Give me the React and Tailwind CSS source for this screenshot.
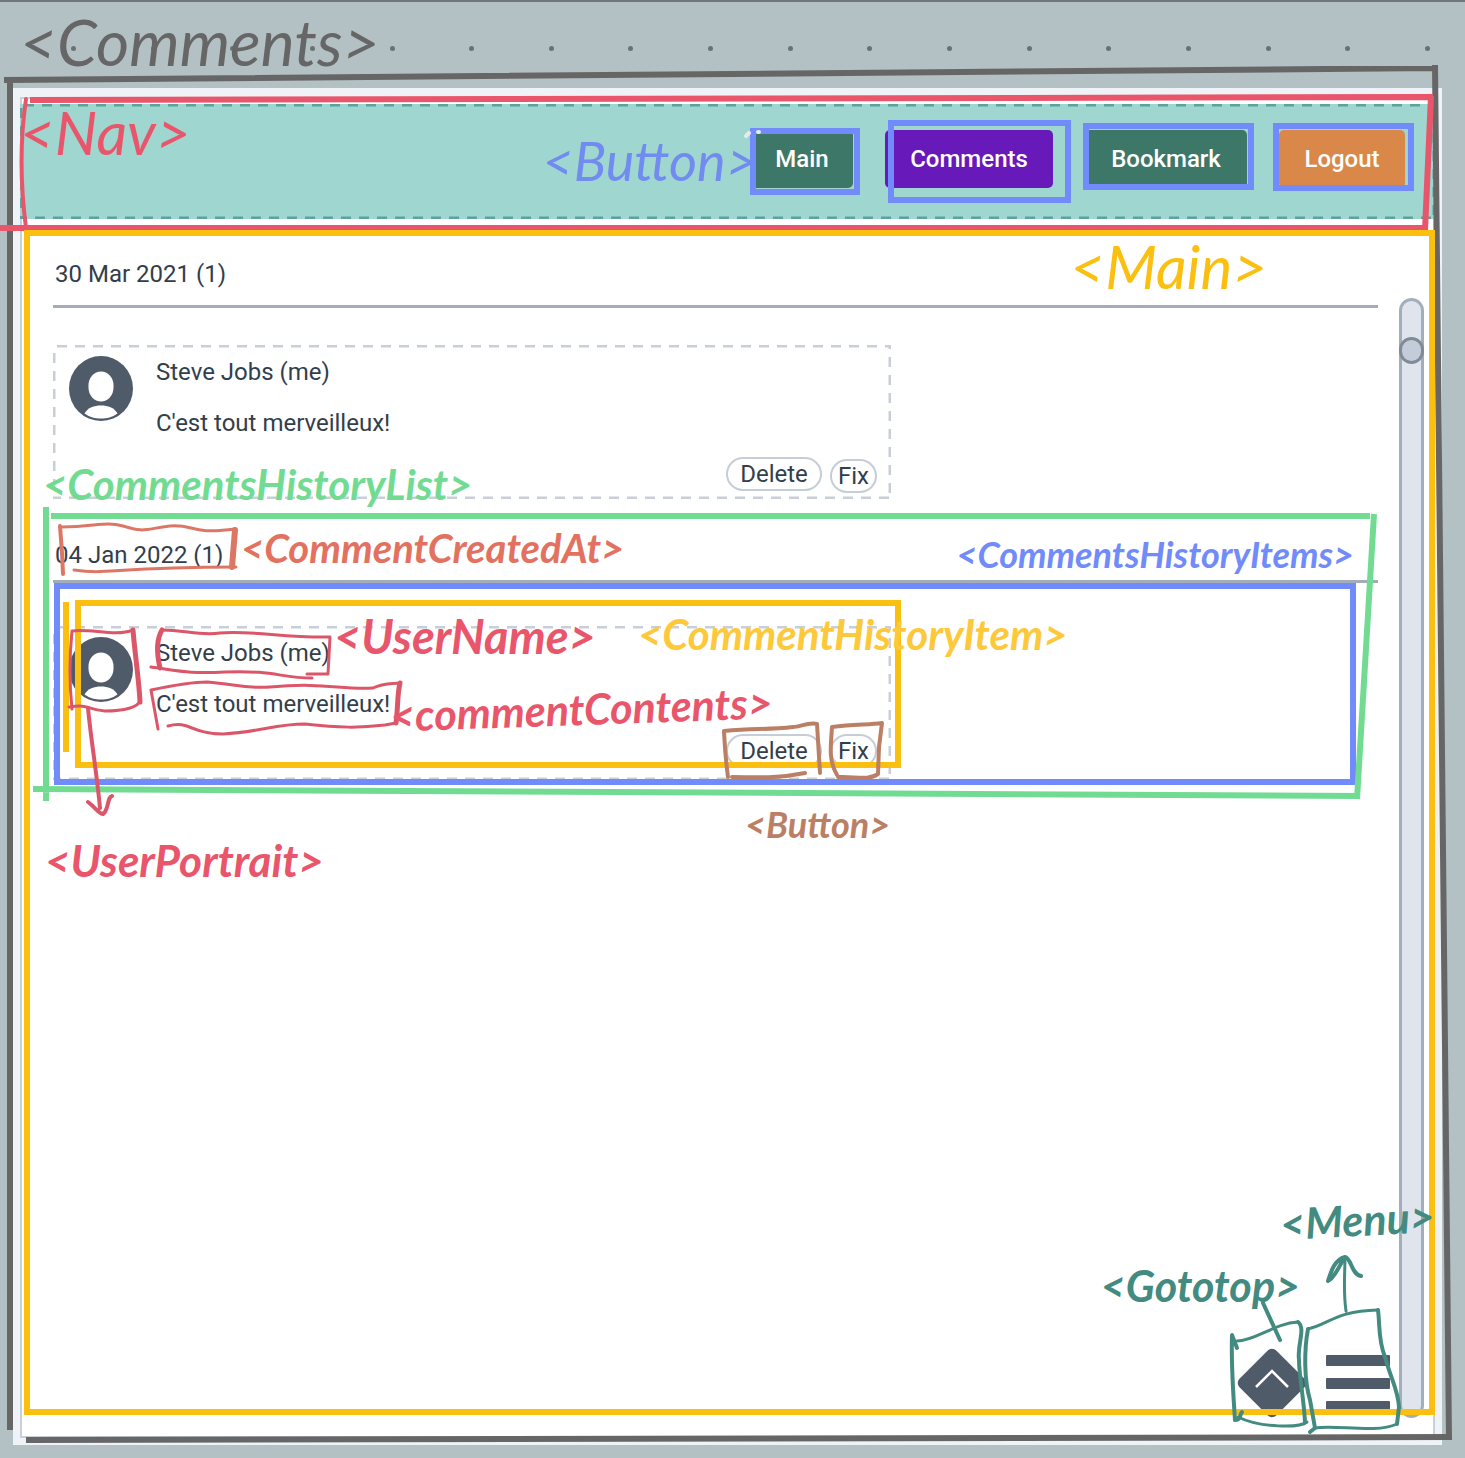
import React from "react";

const NAV_ITEMS = [
  { label: "Main", style: "w-[102px] bg-[#3d7768]" },
  { label: "Comments", style: "w-[168px] bg-[#6819b9]" },
  { label: "Bookmark", style: "w-[162px] bg-[#3d7768]" },
  { label: "Logout", style: "w-[126px] bg-[#d9884a]" },
];

const HISTORY = [
  { date: "30 Mar 2021 (1)", heading: "h-[50px]", actions: "pt-[18px]", fix: "mt-[2px]" },
  { date: "04 Jan 2022 (1)", heading: "h-[44px]", actions: "pt-[14px]", fix: "" },
];

// Component names written over the wireframe.
const LABELS = [
  { text: "<Comments>", style: "left-[20px] top-[8px] text-[64px] text-[#666666]" },
  { text: "<Nav>", style: "left-[20px] top-[100px] text-[60px] text-[#e9566b]" },
  { text: "<Button>", style: "right-[708px] top-[132px] text-[54px] text-[#718bf0]" },
  { text: "<Main>", style: "right-[198px] top-[234px] text-[60px] text-[#fbbf10]" },
  { text: "<CommentsHistoryList>", style: "left-[43px] top-[461px] text-[42px] font-bold text-[#72db92]" },
  { text: "<CommentCreatedAt>", style: "left-[241px] top-[526px] text-[40px] font-bold text-[#e2725f]" },
  { text: "<CommentsHistoryItems>", style: "right-[111px] top-[534px] text-[36px] font-bold text-[#718bfb]" },
  { text: "<UserName>", style: "left-[334px] top-[611px] text-[47px] font-bold text-[#e9566b]" },
  { text: "<CommentHistoryItem>", style: "left-[638px] top-[611px] text-[42px] font-bold text-[#fdc93a]" },
  { text: "<commentContents>", style: "left-[390px] top-[685px] -rotate-2 text-[43px] font-bold text-[#e9566b]" },
  { text: "<Button>", style: "left-[745px] top-[804px] text-[36px] font-bold text-[#bb7f66]" },
  { text: "<UserPortrait>", style: "left-[45px] top-[836px] text-[44px] font-bold text-[#e9566b]" },
  { text: "<Gototop>", style: "right-[165px] top-[1262px] text-[43px] font-bold text-[#438a80]" },
  { text: "<Menu>", style: "right-[30px] top-[1196px] -rotate-3 text-[43px] font-bold text-[#438a80]" },
];

function DashedFrame({ color }) {
  return (
    <svg className={`pointer-events-none absolute inset-0 size-full ${color}`} fill="none" aria-hidden="true">
      <rect width="100%" height="100%" stroke="currentColor" strokeWidth="5" strokeDasharray="10 8" strokeDashoffset="-4" />
    </svg>
  );
}

function DotRow() {
  return (
    <div className="flex h-[86px] items-start justify-between pt-[44px] pr-[35px] pl-[71px]">
      {Array.from({ length: 18 }, (_, i) => (
        <span key={i} className="size-[5px] rounded-full bg-[#6a7173]" />
      ))}
    </div>
  );
}

function Nav() {
  return (
    <nav className="relative -mx-[2px] mt-[5px] flex h-[115px] justify-end gap-[32px] bg-[#9fd6cf] pt-[26px] pr-[30px]">
      <DashedFrame color="text-[#5aa59b]" />
      {NAV_ITEMS.map((item) => (
        <button
          key={item.label}
          type="button"
          className={`h-[58px] rounded-[5px] text-[24px] font-medium text-white ${item.style}`}
        >
          {item.label}
        </button>
      ))}
    </nav>
  );
}

function UserPortrait() {
  return (
    <svg viewBox="0 0 64 65" className="h-[65px] w-[64px] shrink-0" role="img" aria-label="User portrait">
      <ellipse cx="32" cy="32.5" rx="32" ry="32.5" fill="#4f5b69" />
      <rect x="19.5" y="15.5" width="25" height="30" rx="12.5" ry="14" fill="#fff" />
      <path d="M15.5 57.5C19 51.500 25 49.500 32 49.500S45 51.500 48.500 57.500C43 61.500 38 62.500 32 62.500S21 61.500 15.500 57.500Z" fill="#fff" />
    </svg>
  );
}

function CommentItem({ actions, fix }) {
  return (
    <article className="relative flex h-[154px] w-[838px] max-w-full pt-[11px] pr-[14px] pl-[16px]">
      <DashedFrame color="text-[#c8cfd8]" />
      <UserPortrait />
      <div className="flex flex-1 flex-col pl-[23px]">
        <h3 className="text-[24px] leading-[32px]">Steve Jobs (me)</h3>
        <p className="mt-[19px] text-[24px] leading-[32px]">C'est tout merveilleux!</p>
        <div className={`flex justify-end gap-[8px] ${actions}`}>
          <button type="button" className="h-[34px] w-[96px] rounded-full border-2 border-[#c5cdd7] bg-white text-[24px] leading-[30px]">
            Delete
          </button>
          <button type="button" className={`h-[34px] w-[47px] rounded-full border-2 border-[#c5cdd7] bg-white text-[24px] leading-[30px] ${fix}`}>
            Fix
          </button>
        </div>
      </div>
    </article>
  );
}

function HistoryGroup({ date, heading, actions, fix }) {
  return (
    <section className="flex h-[281px] flex-col">
      <h2 className={`border-b-[3px] border-[#a3adb9] pl-[2px] text-[24px] leading-[32px] ${heading}`}>{date}</h2>
      <div className="mt-auto pb-[40px]">
        <CommentItem actions={actions} fix={fix} />
      </div>
    </section>
  );
}

function ScrollTrack() {
  return (
    <div className="mt-[40px] flex w-[25px] flex-col rounded-full border-[3px] border-[#a3aebb] bg-[#dfe4ed] pt-[36px]">
      <button type="button" aria-label="Scroll" className="-mx-[3px] h-[27px] w-[25px] rounded-full border-[3px] border-[#7f8b98] bg-[#c3ccd8]" />
    </div>
  );
}

function FloatingActions() {
  return (
    <div className="absolute right-[43px] bottom-[17px] flex items-center gap-[18px]">
      <button type="button" aria-label="Go to top">
        <svg viewBox="0 0 72 72" className="size-[72px]" fill="none">
          <rect x="10" y="10" width="52" height="52" rx="6" transform="rotate(45 36 36)" fill="#4f5b69" />
          <path d="M20 40 36 24 52 40" stroke="#fff" strokeWidth="2.500" />
        </svg>
      </button>
      <button type="button" aria-label="Menu" className="flex flex-col gap-[12px]">
        <span className="h-[11px] w-[64px] rounded-[1px] bg-[#4f5b69]" />
        <span className="h-[11px] w-[64px] rounded-[1px] bg-[#4f5b69]" />
        <span className="h-[11px] w-[64px] rounded-[1px] bg-[#4f5b69]" />
      </button>
    </div>
  );
}

// Marker strokes that outline each component of the wireframe.
function MarkerStrokes() {
  return (
    <svg
      viewBox="0 0 1465 1458"
      preserveAspectRatio="none"
      className="pointer-events-none absolute inset-x-0 -top-[2px] h-[calc(100%+2px)] w-full"
      fill="none"
      aria-hidden="true"
    >
      <g stroke="#666666" strokeWidth="6">
        <path d="M4 80 1438 68M1435 65 1449 1440M26 1440 1452 1437M10 79V1430" />
      </g>
      <g stroke="#e9566b" strokeWidth="6">
        <path d="M30 100 1433 97M0 228 1427 228M1431 96 1425 230" />
        <path d="M26 99C20 140 20 182 26 228" strokeWidth="4" strokeLinecap="round" />
      </g>
      <g stroke="#718bfb" strokeWidth="6">
        <rect x="753" y="131" width="104" height="61" />
        <rect x="891" y="123" width="177" height="77" />
        <rect x="1086" y="126" width="165" height="61" />
        <rect x="1276" y="126" width="135" height="62" />
      </g>
      <g stroke="#e8e8f0" strokeWidth="4" strokeLinecap="round">
        <path d="M746 136 749 133M758 132 759 132" />
      </g>
      <rect x="27" y="233" width="1405" height="1179" stroke="#fbbf10" strokeWidth="6" />
      <g stroke="#fbbf10" strokeWidth="6">
        <rect x="78" y="603" width="820" height="162" />
        <path d="M66 602V752" />
      </g>
      <rect x="57" y="586" width="1296" height="196" stroke="#718bfb" strokeWidth="6" />
      <g stroke="#72db92" strokeWidth="6">
        <path d="M51 516H1370M46 507V801M33 789 1360 796M1374 514 1357 799" />
      </g>
      <g stroke="#dc7766" strokeWidth="3" strokeLinecap="round" strokeLinejoin="round">
        <path d="M60 526 62 553 63 574" strokeWidth="4" />
        <path d="M62 527C95 527 105 521 123 526 145 533 145 529 170 526 195 524 190 535 235 529M74 570C110 575 110 567 236 567" />
        <path d="M235 530 232 567" strokeWidth="6" />
      </g>
      <g stroke="#dc566a" strokeWidth="3" strokeLinecap="round" strokeLinejoin="round">
        <path d="M72 631C90 628 115 637 133 630M72 631C69 660 70 690 72 709M69 707C90 704 85 709 105 711 125 711 138 707 140 701" />
        <path d="M133 630C135 655 139 680 140 702" strokeWidth="5" />
        <path d="M88 708C91 740 97 775 100 808M88 802C96 808 98 813 103 814 109 810 107 797 112 796" strokeWidth="4" />
        <path d="M162 630C185 630 200 636 220 633 250 630 285 638 330 637L328 674H307M151 667C180 671 190 674 225 672 275 670 280 678 312 678" />
        <path d="M162 630C156 640 157 655 160 668" strokeWidth="5" />
        <path d="M158 729 151 690C170 686 190 682 207 682 235 684 245 689 270 687 325 682 340 690 373 688 383 683 390 684 400 683M168 726C190 720 190 734 223 734 260 732 275 724 305 724 340 728 360 728 385 725L396 723" />
        <path d="M400 683C397 695 398 710 396 723" strokeWidth="5" />
      </g>
      <g stroke="#bb7f66" strokeWidth="4" strokeLinecap="round" strokeLinejoin="round">
        <path d="M728 777C725 755 725 748 724 731C755 728 765 730 793 727 800 727 808 722 817 724L820 773M732 777C755 777 775 779 805 773" />
        <path d="M837 775C828 760 831 744 832 727C855 724 870 725 882 723L879 747 878 774C868 781 855 776 838 777" />
      </g>
      <g stroke="#438a80" strokeWidth="3" strokeLinecap="round" strokeLinejoin="round">
        <path d="M1237 1348 1232 1335C1231 1365 1233 1390 1235 1420 1241 1420 1239 1416 1242 1412" strokeWidth="4" />
        <path d="M1237 1341C1255 1341 1275 1323 1298 1322M1238 1417C1260 1428 1300 1428 1307 1422" />
        <path d="M1298 1322C1306 1328 1297 1345 1299 1360 1299 1375 1304 1400 1305 1422M1263 1303 1280 1340" strokeWidth="4" />
        <path d="M1308 1329C1330 1324 1335 1311 1378 1310M1315 1428C1335 1424 1375 1434 1397 1424M1346 1311C1343 1290 1345 1275 1345 1257" />
        <path d="M1308 1329C1304 1350 1304 1380 1310 1400L1315 1428 1310 1432M1378 1310C1380 1325 1378 1340 1385 1357 1392 1382 1398 1390 1399 1407L1397 1424" strokeWidth="4" />
        <path d="M1361 1276C1351 1274 1352 1259 1345 1257 1334 1260 1331 1272 1328 1281 1335 1278 1339 1265 1345 1258" strokeWidth="4" />
      </g>
    </svg>
  );
}

export default function App() {
  return (
    <div className="relative flex min-h-screen flex-col overflow-hidden border-t-2 border-[#70787a] bg-[#b3c0c4] font-['Roboto','Liberation_Sans',sans-serif] text-[#333e4b]">
      <DotRow />
      <div className="mr-[23px] mb-[13px] ml-[13px] flex flex-1 flex-col bg-[#eff3f8] px-[7px] pt-[9px] pb-[7px]">
        <div className="relative flex flex-1 flex-col border-2 border-[#c8d0da] bg-white">
          <Nav />
          <main className="flex flex-1 gap-[21px] pt-[39px] pr-[9px] pb-[18px] pl-[31px]">
            <div className="flex-1">
              {HISTORY.map((group) => (
                <HistoryGroup key={group.date} {...group} />
              ))}
            </div>
            <ScrollTrack />
          </main>
          <FloatingActions />
        </div>
      </div>
      <MarkerStrokes />
      {LABELS.map((label) => (
        <span
          key={label.text + label.style}
          className={`pointer-events-none absolute font-['Lato',cursive] leading-none whitespace-nowrap italic ${label.style}`}
        >
          {label.text}
        </span>
      ))}
    </div>
  );
}
